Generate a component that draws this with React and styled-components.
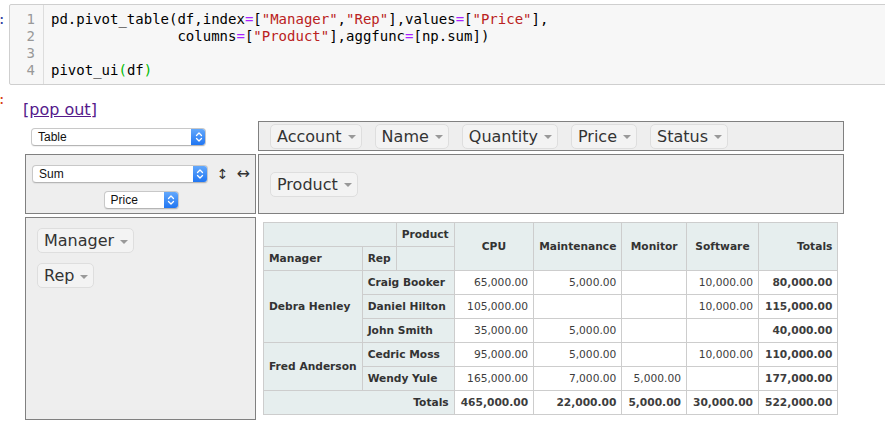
import React from 'react';
import styled, { createGlobalStyle } from 'styled-components';

const GlobalStyle = createGlobalStyle`
    html, body {
        margin: 0;
        padding: 0;
        background: #fff;
        overflow: hidden;
    }
    body {
        font-family: "DejaVu Sans", Verdana, sans-serif;
        color: #333;
    }
`;

const Notebook = styled.div`
    display: flex;
    flex-direction: column;
    width: 905px;
`;

const CellRow = styled.div`
    display: flex;
    align-items: flex-start;
    margin-top: ${p => p.$top || 0}px;
`;

const Prompt = styled.div`
    width: 6px;
    flex: none;
    display: flex;
    justify-content: flex-end;
    overflow: hidden;
    white-space: nowrap;
    font-family: "DejaVu Sans Mono", monospace;
    font-size: 14px;
    line-height: 17px;
    padding-top: ${p => p.$top || 0}px;
    color: ${p => p.$color};
`;

const InputArea = styled.div`
    flex: 1;
    margin-left: 3px;
    display: flex;
    background: #f7f7f7;
    border: 1px solid #cfcfcf;
    border-radius: 2px;
    font-family: "DejaVu Sans Mono", monospace;
    font-size: 14px;
    line-height: 17px;
`;

const Gutter = styled.div`
    width: 25px;
    padding: 6px 8px 5px 0;
    border-right: 1px solid #ddd;
    text-align: right;
    color: #999;
`;

const CodeLines = styled.pre`
    margin: 0;
    padding: 6px 7px 5px;
    font: inherit;
    color: #000;
    white-space: pre;
`;

const Op = styled.span`
    color: #aa22ff;
`;

const Str = styled.span`
    color: #ba2121;
`;

const Match = styled.span`
    color: #00bb00;
`;

const Output = styled.div`
    flex: 1;
    margin-left: 3px;
    padding: 9px 0 0 14px;
`;

const PopOut = styled.a`
    display: inline-block;
    font-size: 16px;
    line-height: 19px;
    color: #551a8b;
    text-decoration: underline;
`;

const PivotUi = styled.div`
    display: grid;
    grid-template-columns: 231px 586px;
    grid-template-rows: 30px 60px 203px;
    column-gap: 2px;
    row-gap: 3px;
    margin: 2px 0 0 2px;
`;

const RendererCell = styled.div`
    display: flex;
    align-items: center;
    padding-left: 6px;
    padding-top: 2px;
`;

const AxisBox = styled.div`
    box-sizing: border-box;
    border: 1px solid #808080;
    background: #eee;
    display: flex;
    flex-direction: ${p => (p.$vertical ? 'column' : 'row')};
    align-items: ${p => (p.$vertical ? 'flex-start' : 'center')};
    gap: ${p => (p.$vertical ? 10 : 13)}px;
    padding: ${p => (p.$vertical ? '10px 11px' : '0 11px')};
`;

const ValsBox = styled.div`
    box-sizing: border-box;
    border: 1px solid #808080;
    background: #eee;
    display: flex;
    flex-direction: column;
    align-items: center;
    gap: 8px;
    padding: 10px 5px 0 6px;
`;

const AggRow = styled.div`
    align-self: stretch;
    display: flex;
    align-items: center;
`;

const OrderArrow = styled.span`
    font-size: ${p => p.$size}px;
    line-height: 12px;
    margin-left: ${p => p.$gap}px;
    color: #333;
`;

const Attr = styled.span`
    display: inline-flex;
    align-items: center;
    background: #f3f3f3;
    border: 1px solid #dedede;
    border-radius: 5px;
    padding: 2px 5px 2px 6px;
    font-size: 16px;
    line-height: 19px;
    color: #333;
    white-space: nowrap;
`;

const Triangle = styled.span`
    width: 0;
    height: 0;
    margin: 2px 0 0 6px;
    border-left: 4px solid transparent;
    border-right: 4px solid transparent;
    border-top: 4px solid #999;
`;

const SelectBox = styled.div`
    box-sizing: border-box;
    width: ${p => p.$width}px;
    height: 18px;
    display: flex;
    background: #fff;
    border: 1px solid #c8c8c8;
    border-bottom-color: #b5b5b5;
    border-radius: 4px;
    box-shadow: 0 1px 1px rgba(0, 0, 0, 0.06);
    font-family: "Liberation Sans", Arial, sans-serif;
    font-size: 12px;
    color: #111;
    overflow: hidden;
`;

const SelectLabel = styled.span`
    flex: 1;
    padding-left: 6px;
    line-height: 16px;
`;

const Stepper = styled.span`
    width: 15px;
    display: flex;
    align-items: center;
    justify-content: center;
    background: linear-gradient(#67abfc, #1c73f2);
    margin: -1px -1px -1px 0;
    border-radius: 0 4px 4px 0;
`;

const OutputCell = styled.div`
    padding: 5px;
`;

const PvtTable = styled.table`
    border-collapse: collapse;
    font-family: "DejaVu Sans", Verdana, sans-serif;
    font-size: 8pt;
    text-align: left;
`;

const Head = styled.th`
    background: #e6eeee;
    border: 1px solid #cdcdcd;
    padding: 5px;
    font-weight: bold;
    color: #333;
    white-space: nowrap;
    text-align: ${p => p.$align || 'left'};
`;

const Val = styled.td`
    color: #3d3d3d;
    background: #fff;
    border: 1px solid #cdcdcd;
    padding: 5px 5px 5px 6px;
    vertical-align: top;
    text-align: right;
    white-space: nowrap;
    font-weight: ${p => (p.$bold ? 'bold' : 'normal')};
`;

const products = ['CPU', 'Maintenance', 'Monitor', 'Software'];

const groups = [
    {
        manager: 'Debra Henley',
        reps: [
            ['Craig Booker', [65000, 5000, null, 10000], 80000],
            ['Daniel Hilton', [105000, null, null, 10000], 115000],
            ['John Smith', [35000, 5000, null, null], 40000]
        ]
    },
    {
        manager: 'Fred Anderson',
        reps: [
            ['Cedric Moss', [95000, 5000, null, 10000], 110000],
            ['Wendy Yule', [165000, 7000, 5000, null], 177000]
        ]
    }
];

const colTotals = [465000, 22000, 5000, 30000];
const grandTotal = 522000;

const fmt = v =>
    v == null
        ? ''
        : v.toLocaleString('en-US', {
              minimumFractionDigits: 2,
              maximumFractionDigits: 2
          });

const Chevrons = () => (
    <svg width="8" height="12" viewBox="0 0 8 12">
        <path
            d="M1.5 4.5 L4 2 L6.5 4.5 M1.5 7.5 L4 10 L6.5 7.5"
            fill="none"
            stroke="#fff"
            strokeWidth="1.3"
            strokeLinecap="round"
            strokeLinejoin="round"
        />
    </svg>
);

const Select = ({ width, children }) => (
    <SelectBox $width={width}>
        <SelectLabel>{children}</SelectLabel>
        <Stepper>
            <Chevrons />
        </Stepper>
    </SelectBox>
);

const Pill = ({ name }) => (
    <Attr>
        {name}
        <Triangle />
    </Attr>
);

const PivotOutput = () => (
    <PvtTable>
        <thead>
            <tr>
                <Head colSpan={2} />
                <Head>Product</Head>
                {products.map(p => (
                    <Head key={p} rowSpan={2} $align="center">
                        {p}
                    </Head>
                ))}
                <Head rowSpan={2} $align="right">
                    Totals
                </Head>
            </tr>
            <tr>
                <Head>Manager</Head>
                <Head>Rep</Head>
                <Head />
            </tr>
        </thead>
        <tbody>
            {groups.map(g =>
                g.reps.map(([rep, vals, total], i) => (
                    <tr key={rep}>
                        {i === 0 && <Head rowSpan={g.reps.length}>{g.manager}</Head>}
                        <Head colSpan={2}>{rep}</Head>
                        {vals.map((v, j) => (
                            <Val key={j}>{fmt(v)}</Val>
                        ))}
                        <Val $bold>{fmt(total)}</Val>
                    </tr>
                ))
            )}
            <tr>
                <Head colSpan={3} $align="right">
                    Totals
                </Head>
                {colTotals.map((v, j) => (
                    <Val key={j} $bold>
                        {fmt(v)}
                    </Val>
                ))}
                <Val $bold>{fmt(grandTotal)}</Val>
            </tr>
        </tbody>
    </PvtTable>
);

export default function App() {
    return (
        <>
            <GlobalStyle />
            <Notebook>
                <CellRow $top={4}>
                    <Prompt $color="#303f9f" $top={7}>In [4]:</Prompt>
                    <InputArea>
                        <Gutter>
                            <div>1</div>
                            <div>2</div>
                            <div>3</div>
                            <div>4</div>
                        </Gutter>
                        <CodeLines>
                            {'pd.pivot_table(df,index'}
                            <Op>=</Op>
                            {'['}
                            <Str>"Manager"</Str>
                            {','}
                            <Str>"Rep"</Str>
                            {'],values'}
                            <Op>=</Op>
                            {'['}
                            <Str>"Price"</Str>
                            {'],\n               columns'}
                            <Op>=</Op>
                            {'['}
                            <Str>"Product"</Str>
                            {'],aggfunc'}
                            <Op>=</Op>
                            {'[np.sum])\n\npivot_ui'}
                            <Match>(</Match>
                            {'df'}
                            <Match>)</Match>
                        </CodeLines>
                    </InputArea>
                </CellRow>
                <CellRow $top={6}>
                    <Prompt $color="#d84315">Out[4]:</Prompt>
                    <Output>
                        <PopOut href="#">[pop out]</PopOut>
                        <PivotUi>
                            <RendererCell>
                                <Select width={175}>Table</Select>
                            </RendererCell>
                            <AxisBox>
                                {['Account', 'Name', 'Quantity', 'Price', 'Status'].map(n => (
                                    <Pill key={n} name={n} />
                                ))}
                            </AxisBox>
                            <ValsBox>
                                <AggRow>
                                    <Select width={178}>Sum</Select>
                                    <OrderArrow $size={14} $gap={9}>↕</OrderArrow>
                                    <OrderArrow $size={16} $gap={8}>↔</OrderArrow>
                                </AggRow>
                                <Select width={75}>Price</Select>
                            </ValsBox>
                            <AxisBox>
                                <Pill name="Product" />
                            </AxisBox>
                            <AxisBox $vertical>
                                <Pill name="Manager" />
                                <Pill name="Rep" />
                            </AxisBox>
                            <OutputCell>
                                <PivotOutput />
                            </OutputCell>
                        </PivotUi>
                    </Output>
                </CellRow>
            </Notebook>
        </>
    );
}
